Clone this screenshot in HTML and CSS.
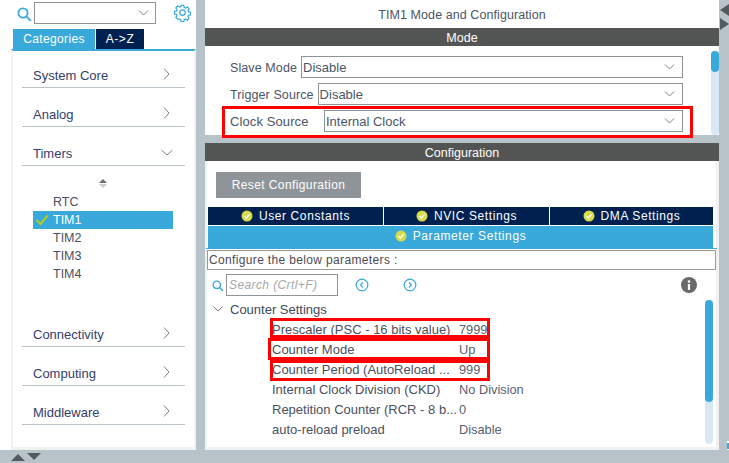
FILE: index.html
```html
<!DOCTYPE html>
<html lang="en">
<head>
<meta charset="utf-8">
<title>TIM1 Mode and Configuration</title>
<link rel="stylesheet" href="styles.css">
</head>
<body>
<div class="app">
  <aside class="side">
    <div class="side-top">
      <svg class="ico-search" viewBox="0 0 15 15"><circle cx="6" cy="6" r="4.6"/><path d="M9.4 9.4L13.8 13.8"/></svg>
      <div class="combo"><svg class="chev" viewBox="0 0 10 6"><path d="M.5.5L5 5 9.5.5"/></svg></div>
      <svg class="ico-gear" viewBox="0 0 18 18"><path d="M7.6 1h2.8l.4 2.2 1.3.6 1.9-1.2 2 2-1.2 1.9.6 1.3 2.1.4v2.8l-2.1.4-.6 1.3 1.2 1.9-2 2-1.9-1.2-1.3.6-.4 2.1H7.6l-.4-2.1-1.3-.6L4 15.600l-2-2 1.200-1.900-.6-1.300L.5 10V7.200l2.100-.4.6-1.300L2 3.600l2-2 1.900 1.200 1.300-.6z"/><circle cx="9" cy="8.600" r="2.900"/></svg>
    </div>
    <div class="side-tabs">
      <span class="stab stab-on">Categories</span>
      <span class="stab stab-off">A-&gt;Z</span>
    </div>
    <div class="side-panel">
      <div class="cat"><span>System Core</span><svg class="cat-r" viewBox="0 0 7 12"><path d="M1 .5L6 6 1 11.500"/></svg></div>
      <div class="cat"><span>Analog</span><svg class="cat-r" viewBox="0 0 7 12"><path d="M1 .5L6 6 1 11.500"/></svg></div>
      <div class="cat"><span>Timers</span><svg class="cat-d" viewBox="0 0 12 7"><path d="M.5 1L6 6l5.500-5"/></svg></div>
      <div class="sub">
        <div class="sort"><i class="sort-up"></i><i class="sort-dn"></i></div>
        <div class="sub-item">RTC</div>
        <div class="sub-item sub-on"><svg class="tick" viewBox="0 0 14 12"><path d="M1.500 6L5.500 10 12.500 1.500"/></svg>TIM1</div>
        <div class="sub-item">TIM2</div>
        <div class="sub-item">TIM3</div>
        <div class="sub-item">TIM4</div>
      </div>
      <div class="cat"><span>Connectivity</span><svg class="cat-r" viewBox="0 0 7 12"><path d="M1 .5L6 6 1 11.500"/></svg></div>
      <div class="cat"><span>Computing</span><svg class="cat-r" viewBox="0 0 7 12"><path d="M1 .5L6 6 1 11.500"/></svg></div>
      <div class="cat"><span>Middleware</span><svg class="cat-r" viewBox="0 0 7 12"><path d="M1 .5L6 6 1 11.500"/></svg></div>
    </div>
    <div class="side-foot"><i class="tri-up"></i><i class="tri-dn"></i></div>
  </aside>

  <main class="main">
    <h1 class="title">TIM1 Mode and Configuration</h1>
    <h2 class="band">Mode</h2>
    <section class="mode">
      <div class="frow"><label class="flabel">Slave Mode</label><div class="sel">Disable<svg class="chev" viewBox="0 0 10 6"><path d="M.5.5L5 5 9.500.5"/></svg></div></div>
      <div class="frow"><label class="flabel">Trigger Source</label><div class="sel">Disable<svg class="chev" viewBox="0 0 10 6"><path d="M.5.5L5 5 9.500.5"/></svg></div></div>
      <div class="frow"><label class="flabel flabel-wide">Clock Source</label><div class="sel">Internal Clock<svg class="chev" viewBox="0 0 10 6"><path d="M.5.5L5 5 9.500.5"/></svg></div></div>
      <div class="mark mark-clock"></div>
      <div class="sbar sbar-mode"><div class="sthumb sthumb-mode"></div></div>
    </section>
    <h2 class="band band-conf">Configuration</h2>
    <section class="conf">
      <button class="reset">Reset Configuration</button>
      <div class="tabs3">
        <div class="tab3 tab3-a"><svg class="okic" viewBox="0 0 12 12"><circle cx="6" cy="6" r="5.500"/><path d="M3.300 6L5.300 8 8.700 4.300"/></svg>User Constants</div>
        <div class="tab3 tab3-b"><svg class="okic" viewBox="0 0 12 12"><circle cx="6" cy="6" r="5.500"/><path d="M3.300 6L5.300 8 8.700 4.300"/></svg>NVIC Settings</div>
        <div class="tab3 tab3-c"><svg class="okic" viewBox="0 0 12 12"><circle cx="6" cy="6" r="5.500"/><path d="M3.300 6L5.300 8 8.700 4.300"/></svg>DMA Settings</div>
      </div>
      <div class="tab-wide"><svg class="okic" viewBox="0 0 12 12"><circle cx="6" cy="6" r="5.500"/><path d="M3.300 6L5.300 8 8.700 4.300"/></svg>Parameter Settings</div>
      <div class="tab-line"></div>
      <div class="hint">Configure the below parameters :</div>
      <div class="tools">
        <svg class="ico-search2" viewBox="0 0 15 15"><circle cx="6" cy="6" r="4.600"/><path d="M9.400 9.400L13.800 13.800"/></svg>
        <div class="find">Search (Crtl+F)</div>
        <svg class="nav nav-l" viewBox="0 0 14 14"><circle cx="7" cy="7" r="5.800"/><path d="M8 4.500L5.500 7 8 9.500"/></svg>
        <svg class="nav nav-r" viewBox="0 0 14 14"><circle cx="7" cy="7" r="5.800"/><path d="M6 4.500L8.500 7 6 9.500"/></svg>
        <svg class="info" viewBox="0 0 16 16"><circle cx="8" cy="8" r="8"/><rect x="6.900" y="7" width="2.200" height="6" rx=".4"/><circle class="info-dot" cx="8" cy="4.500" r="1.300"/></svg>
      </div>
      <div class="group"><svg class="group-chev" viewBox="0 0 10 6"><path d="M.5.5L5 5 9.500.5"/></svg>Counter Settings</div>
      <div class="prow"><span class="pname">Prescaler (PSC - 16 bits value)</span><span class="pval">7999</span></div>
      <div class="prow"><span class="pname">Counter Mode</span><span class="pval">Up</span></div>
      <div class="prow"><span class="pname">Counter Period (AutoReload ...</span><span class="pval">999</span></div>
      <div class="prow"><span class="pname">Internal Clock Division (CKD)</span><span class="pval">No Division</span></div>
      <div class="prow"><span class="pname">Repetition Counter (RCR - 8 b...</span><span class="pval">0</span></div>
      <div class="prow"><span class="pname">auto-reload preload</span><span class="pval">Disable</span></div>
      <div class="mark mark-p1"></div>
      <div class="mark mark-p2"></div>
      <div class="mark mark-p3"></div>
      <div class="sbar sbar-conf"><div class="sthumb sthumb-conf"></div></div>
    </section>
  </main>

  <div class="rail">
    <i class="rail-l"></i>
    <i class="rail-r"></i>
    <div class="rail-corner"></div>
  </div>
</div>
</body>
</html>
```
FILE: styles.css
```css
* { box-sizing: border-box; }
html, body { margin: 0; padding: 0; }
body { width: 729px; height: 463px; overflow: hidden; background: #b8c3c9; font-family: "Liberation Sans", Arial, sans-serif; font-size: 12px; color: #3f4a5c; }
svg { display: block; fill: none; }
.app { display: flex; width: 729px; height: 463px; }

/* left column */
.side { width: 205px; flex: none; padding-right: 9px; display: flex; flex-direction: column; }
.side-top { height: 29px; background: #fff; position: relative; display: flex; align-items: flex-start; padding: 2px 0 0 34px; }
.ico-search { position: absolute; left: 17px; top: 7px; width: 15px; height: 15px; stroke: #39a9dc; stroke-width: 1.800; }
.combo { width: 122px; height: 22px; border: 1px solid #8f9499; display: flex; align-items: center; justify-content: flex-end; padding-right: 6px; }
.chev { width: 11px; height: 6px; stroke: #7d8287; stroke-width: 1; }
.ico-gear { width: 17px; height: 18px; margin: 2px 0 0 18px; stroke: #39a9dc; stroke-width: 1.300; }
.side-tabs { height: 20px; background: #fff; padding-left: 13px; display: flex; gap: 1px; }
.stab { display: flex; align-items: center; justify-content: center; color: #fff; font-size: 12px; letter-spacing: .35px; }
.stab-on { width: 82px; background: #39a9dc; }
.stab-off { width: 48px; background: #002050; letter-spacing: .6px; }
.side-panel { height: 401px; margin-left: 11px; width: 185px; border-top: 2px solid #39a9dc; border-left: 2px solid #f1f1f1; border-right: 2px solid #f1f1f1; border-bottom: 3px solid #f1f1f1; background: #fff; padding: 9px 9px 0 9px; display: flex; flex-direction: column; gap: 11px; box-shadow: -11px 0 0 #fff; }
.cat { height: 28px; flex: none; border-bottom: 1px solid #b8c3c9; padding: 8px 0 0 11px; display: flex; justify-content: space-between; align-items: flex-start; font-size: 13px; color: #33406b; line-height: 16px; }
.cat-r { width: 7px; height: 12px; margin: 0 15px 0 0; stroke: #7d8287; stroke-width: 1; }
.cat-d { width: 12px; height: 7px; margin: 3px 12px 0 0; stroke: #7d8287; stroke-width: 1; }
.sub { height: 131px; flex: none; padding: 0 0 0 11px; font-size: 13px; }
.sort { height: 16px; width: 140px; display: flex; flex-direction: column; align-items: center; padding-top: 2px; gap: 1px; }
.sort i { display: block; width: 0; height: 0; border-left: 4px solid transparent; border-right: 4px solid transparent; }
.sort-up { border-bottom: 4px solid #6b6f73; }
.sort-dn { border-top: 4px solid #c9cccf; }
.sub-item { height: 18px; width: 140px; padding-left: 20px; line-height: 18px; color: #4a4f62; font-size: 12.500px; position: relative; }
.sub-on { background: #39a9dc; color: #fff; }
.tick { position: absolute; left: 2px; top: 3px; width: 14px; height: 12px; stroke: #b5cc18; stroke-width: 2; }
.side-foot { position: relative; flex: 1; }
.side-foot i { position: absolute; top: 4px; width: 0; height: 0; border-left: 7px solid transparent; border-right: 7px solid transparent; }
.tri-up { left: 11px; border-bottom: 7px solid #53595d; }
.tri-dn { left: 27px; top: 3px !important; border-top: 7px solid #53595d; }

/* main */
.main { width: 514px; flex: none; display: flex; flex-direction: column; }
.title { margin: 0; height: 28px; background: #fff; font-size: 12.500px; font-weight: 400; text-align: center; line-height: 30px; color: #4a5568; letter-spacing: .08px; }
.band { margin: 0; height: 18px; background: #535554; color: #fff; font-size: 12.500px; font-weight: 400; text-align: center; line-height: 20px; }
.band-conf { margin-top: 8px; }
.mode { height: 89px; background: #fff; position: relative; padding: 10px 0 0 25px; display: flex; flex-direction: column; gap: 5px; }
.frow { display: flex; align-items: center; height: 22px; width: 453px; }
.flabel { font-size: 12.500px; letter-spacing: .1px; color: #4a5568; margin-right: 4px; padding-top: 1px; white-space: nowrap; }
.flabel-wide { width: 94px; margin-right: 0; font-size: 13px; }
.sel { flex: 1; height: 22px; border: 1px solid #8f9499; display: flex; align-items: center; justify-content: space-between; padding: 0 7px 0 1px; font-size: 13px; color: #4a5568; }
.mark { position: absolute; border: 3px solid #f00; pointer-events: none; }
.mark-clock { left: 17px; top: 60px; width: 471px; height: 32px; }
.sbar { position: absolute; width: 8px; background: #d9e8f5; border-radius: 4px; }
.sthumb { width: 8px; background: #39a9dc; border-radius: 4px; }
.sbar-mode { left: 506px; top: 5px; height: 84px; }
.sthumb-mode { height: 21px; }
.conf { height: 289px; background: #fff; border-bottom: 3px solid #f1f1f1; box-shadow: inset 2px 0 0 #f1f1f1, inset -3px 0 0 #f1f1f1; position: relative; padding: 11px 0 0 3px; }
.reset { display: block; margin: 0 0 9px 8px; width: 145px; height: 26px; border: 0; background: #8f9499; color: #fff; font: 12px "Liberation Sans", Arial, sans-serif; letter-spacing: .4px; padding: 0; }
.tabs3 { display: flex; width: 505px; height: 18px; gap: 1px; }
.tab3 { flex: none; background: #002050; color: #fff; display: flex; align-items: center; justify-content: center; font-size: 12px; letter-spacing: .6px; }
.tab3-a { width: 175px; }
.tab3-b { width: 165px; }
.tab3-c { width: 163px; }
.okic { width: 12px; height: 12px; margin-right: 6px; }
.okic circle { fill: #d7dc4a; }
.okic path { stroke: #fff; stroke-width: 1.300; }
.tab-wide { width: 505px; height: 22px; margin-top: 1px; padding-bottom: 3px; background: #39a9dc; color: #fff; display: flex; align-items: center; justify-content: center; font-size: 12px; letter-spacing: .6px; }
.tab-line { width: 511px; margin-left: -2px; height: 1px; background: #39a9dc; }
.hint { width: 509px; height: 20px; margin: 1px 0 0 -1px; border: 1px solid #9a9a9a; padding-left: 1px; line-height: 18px; font-size: 12px; letter-spacing: .35px; color: #4a4a55; }
.tools { position: relative; height: 22px; margin-top: 4px; padding-left: 18px; }
.ico-search2 { position: absolute; left: 4px; top: 6px; width: 12px; height: 12px; stroke: #39a9dc; stroke-width: 1.800; }
.find { width: 112px; height: 22px; border: 1px solid #8f9499; font-size: 12px; font-style: italic; color: #a5a8ab; padding-left: 2px; line-height: 20px; letter-spacing: .4px; }
.nav { position: absolute; top: 4px; width: 14px; height: 14px; stroke: #39a9dc; stroke-width: 1.200; }
.nav-l { left: 147px; }
.nav-r { left: 195px; }
.info { position: absolute; left: 473px; top: 3px; width: 16px; height: 16px; }
.info circle { fill: #6a6a6a; }
.info rect, .info .info-dot { fill: #fff; }
.group { height: 20px; margin-top: 3px; display: flex; align-items: center; padding-left: 5px; font-size: 13px; color: #3f4a5c; }
.group-chev { width: 10px; height: 6px; margin-right: 7px; stroke: #7d8287; stroke-width: 1; }
.prow { height: 20px; display: flex; align-items: center; padding: 0 0 0 64px; font-size: 13px; color: #4a5060; white-space: nowrap; }
.pname { width: 187px; overflow: hidden; }
.pval { color: #5a6070; font-size: 12.800px; }
.mark-p1 { left: 65px; top: 157px; width: 220px; height: 20px; }
.mark-p2 { left: 63px; top: 177px; width: 222px; height: 22px; }
.mark-p3 { left: 65px; top: 199px; width: 220px; height: 21px; }
.sbar-conf { left: 500px; top: 139px; height: 144px; }
.sthumb-conf { height: 102px; }

/* right rail */
.rail { flex: 1; position: relative; }
.rail i { position: absolute; width: 0; height: 0; border-top: 6px solid transparent; border-bottom: 6px solid transparent; }
.rail-l { left: 1px; top: 4px; border-right: 9px solid #53595d; }
.rail-r { left: 1px; top: 18px; border-left: 9px solid #53595d; }
.rail-corner { position: absolute; left: 8px; top: 441px; width: 2px; height: 9px; background: #fff; border-top: 2px solid #fff; border-bottom: 1px solid #fff; box-shadow: inset 2px 0 0 #39a9dc; }
```
